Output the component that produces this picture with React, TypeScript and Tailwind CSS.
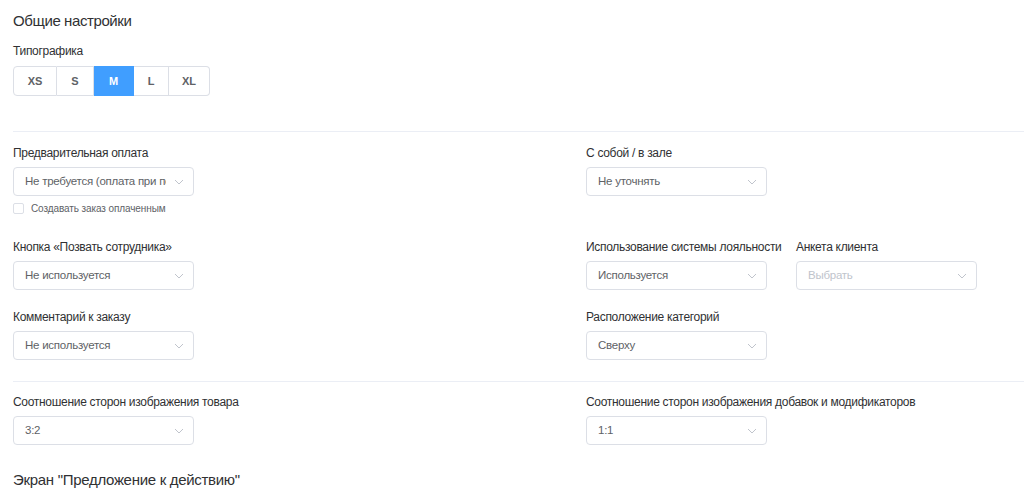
import { ReactNode } from "react";

const SIZES = [
  { label: "XS", w: "w-[44px]" },
  { label: "S", w: "w-[37px]" },
  { label: "M", w: "w-[40px]" },
  { label: "L", w: "w-[35px]" },
  { label: "XL", w: "w-[41px]" },
];

function Chevron() {
  return (
    <svg width="10" height="6" viewBox="0 0 10 6" className="shrink-0">
      <path d="M1 1l4 4 4-4" fill="none" stroke="#c0c4cc" strokeWidth="1" />
    </svg>
  );
}

function Select({ value, placeholder }: { value?: string; placeholder?: string }) {
  return (
    <div className="w-[181px] h-[29px] border border-[#dcdfe6] rounded-[4px] bg-white flex items-center pl-[11px] pr-[9px] gap-[8px]">
      <span
        className={`flex-1 overflow-hidden whitespace-nowrap text-[11.5px] tracking-[-0.25px] ${
          value ? "text-[#606266]" : "text-[#c0c4cc]"
        }`}
      >
        {value || placeholder}
      </span>
      <Chevron />
    </div>
  );
}

function Field({ label, children }: { label: string; children: ReactNode }) {
  return (
    <div className="flex flex-col">
      <div className="text-[12px] leading-[16px] tracking-[-0.3px] text-[#303133] whitespace-nowrap">
        {label}
      </div>
      <div className="mt-[6px]">{children}</div>
    </div>
  );
}

function Divider() {
  return <div className="h-px bg-[#ebeef5]" />;
}

export default function App() {
  return (
    <div className="min-h-[502px] bg-white pl-[13px] font-['Liberation_Sans',Arial,sans-serif] antialiased">
      <h1 className="pt-[11px] text-[15px] leading-[20px] tracking-[-0.4px] text-[#303133]">
        Общие настройки
      </h1>

      <div className="mt-[12px] text-[12px] leading-[16px] tracking-[-0.3px] text-[#303133]">
        Типографика
      </div>
      <div className="mt-[7px] flex h-[30px] w-fit">
        {SIZES.map((s, i) => {
          const active = s.label === "M";
          return (
            <div
              key={s.label}
              className={`${s.w} flex items-center justify-center text-[11px] font-bold border-y ${
                i === 0 ? "border-l rounded-l-[4px]" : ""
              } ${i === SIZES.length - 1 ? "rounded-r-[4px]" : ""} border-r ${
                active
                  ? "bg-[#409eff] border-[#409eff] text-white"
                  : "bg-white border-[#dcdfe6] text-[#606266]"
              }`}
            >
              {s.label}
            </div>
          );
        })}
      </div>

      <div className="mt-[35px]">
        <Divider />
      </div>

      <div className="grid grid-cols-[573px_1fr] mt-[13px]">
        <div className="flex flex-col">
          <Field label="Предварительная оплата">
            <Select value="Не требуется (оплата при получении)" />
          </Field>
          <label className="mt-[5px] flex items-center gap-[7px] h-[14px]">
            <span className="w-[11px] h-[11px] border border-[#dcdfe6] rounded-[2px] bg-white" />
            <span className="text-[10px] tracking-[-0.1px] text-[#606266]">
              Создавать заказ оплаченным
            </span>
          </label>
        </div>
        <div>
          <Field label="С собой / в зале">
            <Select value="Не уточнять" />
          </Field>
        </div>
      </div>

      <div className="grid grid-cols-[573px_1fr] mt-[24px]">
        <Field label="Кнопка «Позвать сотрудника»">
          <Select value="Не используется" />
        </Field>
        <div className="flex">
          <div className="w-[210px]">
            <Field label="Использование системы лояльности">
              <Select value="Используется" />
            </Field>
          </div>
          <Field label="Анкета клиента">
            <Select placeholder="Выбрать" />
          </Field>
        </div>
      </div>

      <div className="grid grid-cols-[573px_1fr] mt-[19px]">
        <Field label="Комментарий к заказу">
          <Select value="Не используется" />
        </Field>
        <Field label="Расположение категорий">
          <Select value="Сверху" />
        </Field>
      </div>

      <div className="mt-[21px]">
        <Divider />
      </div>

      <div className="grid grid-cols-[573px_1fr] mt-[12px]">
        <Field label="Соотношение сторон изображения товара">
          <Select value="3:2" />
        </Field>
        <Field label="Соотношение сторон изображения добавок и модификаторов">
          <Select value="1:1" />
        </Field>
      </div>

      <h2 className="mt-[25px] text-[15px] leading-[20px] tracking-[-0.3px] text-[#303133]">
        Экран "Предложение к действию"
      </h2>
    </div>
  );
}
